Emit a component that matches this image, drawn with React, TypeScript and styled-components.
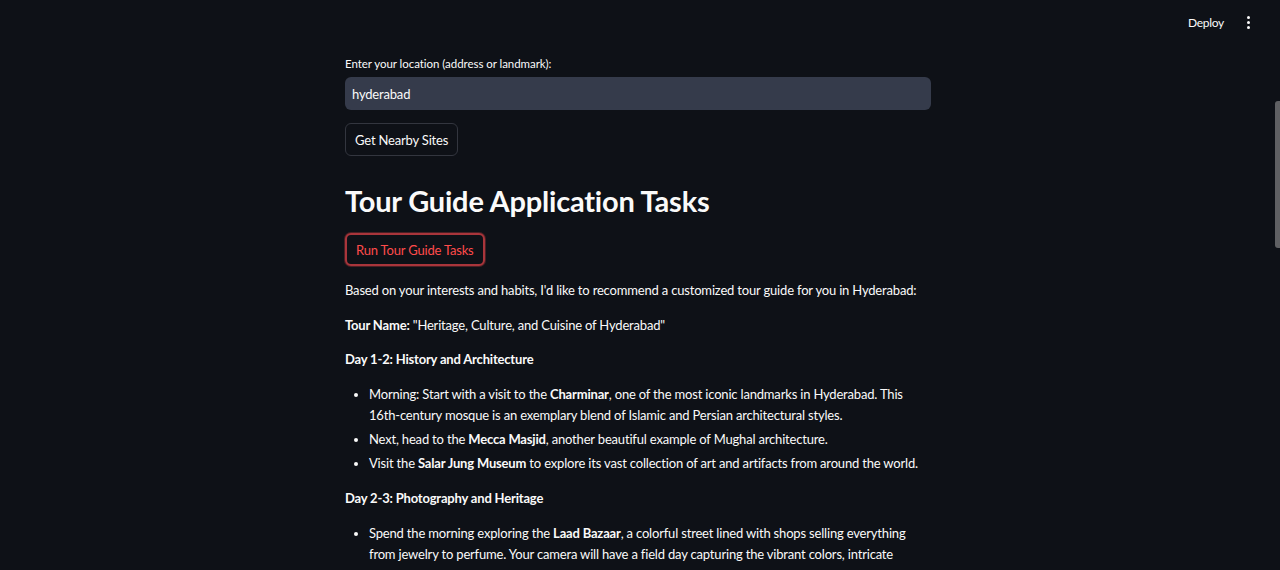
import React from "react";
import styled, { createGlobalStyle } from "styled-components";

const Global = createGlobalStyle`
  html, body { margin: 0; padding: 0; background: #0e1117; }
  body {
    font-family: Lato, "Liberation Sans", sans-serif;
    color: #fafafa;
    overflow: hidden;
    height: 570px;
  }
  * { box-sizing: border-box; }
`;

const Header = styled.header`
  height: 44px;
  display: flex;
  align-items: center;
  justify-content: flex-end;
  padding-right: 26px;
  gap: 11px;
`;

const DeployButton = styled.button`
  background: transparent;
  border: none;
  color: #fafafa;
  font-family: inherit;
  font-size: 12px;
  letter-spacing: -0.3px;
  padding: 4px 8px;
`;

const MenuDots = styled.div`
  display: flex;
  flex-direction: column;
  gap: 2px;
  padding: 0 4px;
  span {
    width: 3px;
    height: 3px;
    border-radius: 50%;
    background: #fafafa;
  }
`;

const Page = styled.div`
  display: flex;
  justify-content: center;
  padding-right: 4px;
`;

const Column = styled.main`
  width: 586px;
  display: flex;
  flex-direction: column;
  letter-spacing: -0.18px;
`;

const Label = styled.label`
  font-size: 11.5px;
  line-height: 14px;
  margin-top: 13px;
  letter-spacing: -0.05px;
  color: #fafafa;
`;

const Input = styled.input`
  margin-top: 6px;
  height: 33px;
  width: 100%;
  border: none;
  border-radius: 6px;
  background: #353b4b;
  color: #fafafa;
  font-family: inherit;
  font-size: 13px;
  letter-spacing: -0.18px;
  padding: 0 7px;
  outline: none;
`;

const Button = styled.button<{ $active?: boolean }>`
  align-self: flex-start;
  height: 33px;
  padding: 0 9px;
  border-radius: 6px;
  background: #0e1117;
  font-family: inherit;
  font-size: 13px;
  letter-spacing: -0.18px;
  color: ${(p) => (p.$active ? "#ff4b4b" : "#fafafa")};
  border: ${(p) => (p.$active ? "2px solid #a9353b" : "1px solid #33363f")};
  box-shadow: ${(p) => (p.$active ? "0 0 0 1px rgba(255,75,75,0.25)" : "none")};
`;

const Heading = styled.h1`
  font-size: 29px;
  font-weight: 700;
  margin: 27px 0 0;
  line-height: 36px;
  letter-spacing: -0.2px;
`;

const Text = styled.p`
  margin: 0;
  font-size: 13px;
  line-height: 21px;
`;

const List = styled.ul`
  margin: 0;
  padding-left: 24px;
  font-size: 13px;
  line-height: 21px;
  li { margin-bottom: 3px; }
`;

const Scrollbar = styled.div`
  position: fixed;
  right: 0;
  top: 101px;
  width: 5px;
  height: 147px;
  background: #5f6063;
  border-radius: 3px 0 0 3px;
`;

export default function App() {
  return (
    <>
      <Global />
      <Header>
        <DeployButton>Deploy</DeployButton>
        <MenuDots>
          <span />
          <span />
          <span />
        </MenuDots>
      </Header>
      <Page>
        <Column>
          <Label>Enter your location (address or landmark):</Label>
          <Input defaultValue="hyderabad" />
          <Button style={{ marginTop: 13 }}>Get Nearby Sites</Button>
          <Heading>Tour Guide Application Tasks</Heading>
          <Button $active style={{ marginTop: 14 }}>Run Tour Guide Tasks</Button>
          <Text style={{ marginTop: 14 }}>
            Based on your interests and habits, I'd like to recommend a customized tour guide for you in Hyderabad:
          </Text>
          <Text style={{ marginTop: 14 }}>
            <b>Tour Name:</b> "Heritage, Culture, and Cuisine of Hyderabad"
          </Text>
          <Text style={{ marginTop: 13 }}>
            <b>Day 1-2: History and Architecture</b>
          </Text>
          <List style={{ marginTop: 14 }}>
            <li>
              Morning: Start with a visit to the <b>Charminar</b>, one of the most iconic landmarks in Hyderabad. This
              16th-century mosque is an exemplary blend of Islamic and Persian architectural styles.
            </li>
            <li>
              Next, head to the <b>Mecca Masjid</b>, another beautiful example of Mughal architecture.
            </li>
            <li>
              Visit the <b>Salar Jung Museum</b> to explore its vast collection of art and artifacts from around the world.
            </li>
          </List>
          <Text style={{ marginTop: 11 }}>
            <b>Day 2-3: Photography and Heritage</b>
          </Text>
          <List style={{ marginTop: 14 }}>
            <li>
              Spend the morning exploring the <b>Laad Bazaar</b>, a colorful street lined with shops selling everything
              from jewelry to perfume. Your camera will have a field day capturing the vibrant colors, intricate
              designs, and bustling atmosphere.
            </li>
          </List>
        </Column>
      </Page>
      <Scrollbar />
    </>
  );
}
